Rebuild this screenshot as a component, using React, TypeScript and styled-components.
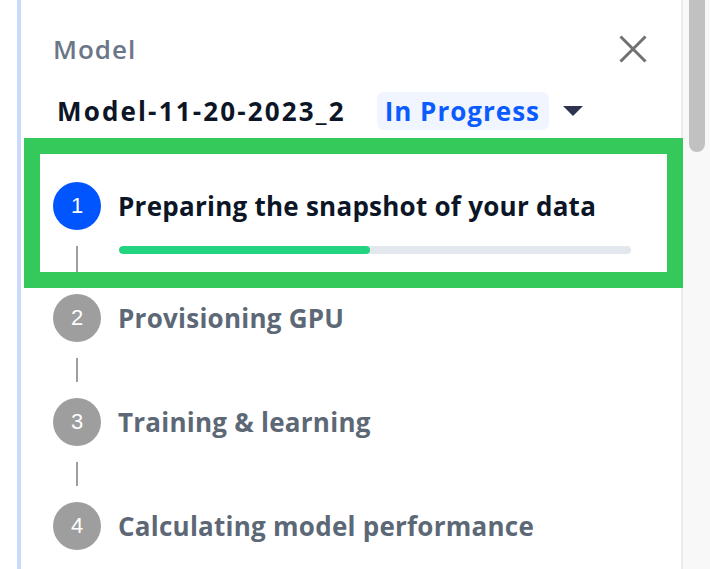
import React from 'react'
import styled, { createGlobalStyle } from 'styled-components'

const GlobalStyle = createGlobalStyle`
  html, body {
    margin: 0;
    padding: 0;
    background: #ffffff;
  }
  body {
    font-family: 'Open Sans', 'Noto Sans', sans-serif;
  }
`

interface Step {
  label: string
  progress?: number
}

const steps: Step[] = [
  { label: 'Preparing the snapshot of your data', progress: 49 },
  { label: 'Provisioning GPU' },
  { label: 'Training & learning' },
  { label: 'Calculating model performance' }
]

const Frame = styled.div`
  position: relative;
  display: flex;
  height: 569px;
  overflow: hidden;
  padding-left: 17px;
  background: #ffffff;
`

const Accent = styled.div`
  width: 4px;
  flex-shrink: 0;
  background: #c9d8fc;
`

const Panel = styled.div`
  flex: 1;
  padding: 31px 0 0 32px;
  display: flex;
  flex-direction: column;
`

const Scrollbar = styled.div`
  width: 27px;
  flex-shrink: 0;
  border-left: 2px solid #ececec;
  background: #f8f8f8;
  padding-left: 6px;
`

const Thumb = styled.div`
  width: 16px;
  height: 162px;
  margin-top: -10px;
  border-radius: 8px;
  background: #c1c1c1;
`

const HeaderRow = styled.div`
  display: flex;
  align-items: center;
  justify-content: space-between;
  padding-right: 34px;
  height: 36px;
`

const Label = styled.span`
  font-size: 26px;
  font-weight: 600;
  letter-spacing: 1px;
  color: #6b7689;
`

const CloseButton = styled.button`
  width: 28px;
  height: 28px;
  padding: 0;
  border: none;
  background: none;
  color: #717171;
  display: flex;
  align-items: center;
  justify-content: center;
`

const ModelRow = styled.div`
  display: flex;
  align-items: center;
  margin-top: 25px;
  height: 38px;
`

const ModelName = styled.span`
  font-size: 26px;
  font-weight: 700;
  letter-spacing: 2.15px;
  color: #0c1626;
  padding-left: 4px;
`

const Badge = styled.span`
  margin-left: 31px;
  height: 38px;
  display: flex;
  align-items: center;
  padding: 0 9px 0 8px;
  border-radius: 7px;
  background: #f1f5ff;
  color: #0a5cff;
  font-size: 26px;
  font-weight: 700;
  letter-spacing: 1px;
`

const Caret = styled.span`
  margin-left: 14px;
  width: 0;
  height: 0;
  border-left: 10px solid transparent;
  border-right: 10px solid transparent;
  border-top: 10px solid #2e3450;
`

const StepList = styled.div`
  margin-top: 52px;
  display: flex;
  flex-direction: column;
`

const StepRow = styled.div`
  display: grid;
  grid-template-columns: 48px 1fr;
  column-gap: 17px;
`

const Rail = styled.div`
  display: flex;
  flex-direction: column;
  align-items: center;
`

const Circle = styled.div<{ $active?: boolean }>`
  width: 48px;
  height: 48px;
  border-radius: 50%;
  background: ${p => (p.$active ? '#0055ff' : '#9e9e9e')};
  color: #ffffff;
  font-family: 'Liberation Sans', Arial, sans-serif;
  font-size: 22px;
  display: flex;
  align-items: center;
  justify-content: center;
  flex-shrink: 0;
`

const Connector = styled.div`
  width: 2px;
  flex: 1;
  margin: 16px 0 16px;
  background: #9e9e9e;
`

const StepBody = styled.div<{ $last?: boolean }>`
  min-height: ${p => (p.$last ? '48px' : '104px')};
  padding-right: 50px;
`

const StepTitle = styled.div<{ $active?: boolean }>`
  height: 48px;
  display: flex;
  align-items: center;
  font-size: 26px;
  font-weight: 700;
  letter-spacing: 0.25px;
  color: ${p => (p.$active ? '#0c1626' : '#5d6876')};
  white-space: nowrap;
`

const Track = styled.div`
  margin: 16px 0 40px 1px;
  height: 8px;
  width: 512px;
  border-radius: 4px;
  background: #e3e8ef;
  overflow: hidden;
`

const Fill = styled.div`
  height: 100%;
  border-radius: 4px;
  background: #22d47f;
`

const Highlight = styled.div`
  position: absolute;
  left: 24px;
  top: 138px;
  width: 659px;
  height: 150px;
  box-sizing: border-box;
  border: 16px solid #35c85a;
  pointer-events: none;
`

export default function App() {
  return (
    <>
      <GlobalStyle />
      <Frame>
        <Accent />
        <Panel>
          <HeaderRow>
            <Label>Model</Label>
            <CloseButton aria-label="Close">
              <svg width="28" height="28" viewBox="0 0 28 28" fill="none">
                <path d="M1.5 1.5L26.5 26.5M1.5 26.5L26.5 1.5" stroke="currentColor" strokeWidth="3" />
              </svg>
            </CloseButton>
          </HeaderRow>
          <ModelRow>
            <ModelName>Model-11-20-2023_2</ModelName>
            <Badge>In Progress</Badge>
            <Caret />
          </ModelRow>
          <StepList>
            {steps.map((step, i) => {
              const active = i === 0
              const last = i === steps.length - 1
              return (
                <StepRow key={step.label}>
                  <Rail>
                    <Circle $active={active}>{i + 1}</Circle>
                    {!last && <Connector />}
                  </Rail>
                  <StepBody $last={last}>
                    <StepTitle $active={active}>{step.label}</StepTitle>
                    {step.progress !== undefined && (
                      <Track>
                        <Fill style={{ width: `${step.progress}%` }} />
                      </Track>
                    )}
                  </StepBody>
                </StepRow>
              )
            })}
          </StepList>
        </Panel>
        <Scrollbar>
          <Thumb />
        </Scrollbar>
        <Highlight />
      </Frame>
    </>
  )
}
